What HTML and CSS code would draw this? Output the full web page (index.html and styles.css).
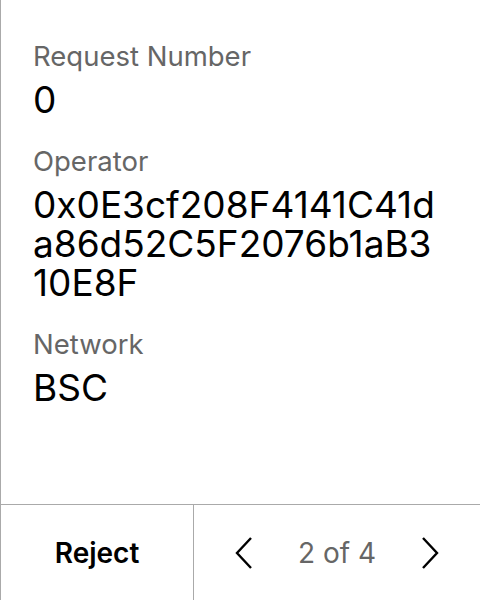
FILE: index.html
```html
<!DOCTYPE html>
<html>
<head>
<meta charset="utf-8">
<link rel="stylesheet" href="styles.css">
</head>
<body>
<div class="panel">
  <div class="content">
    <div class="field">
      <div class="label">Request Number</div>
      <div class="value">0</div>
    </div>
    <div class="field">
      <div class="label">Operator</div>
      <div class="value">0x0E3cf208F4141C41da86d52C5F2076b1aB310E8F</div>
    </div>
    <div class="field">
      <div class="label">Network</div>
      <div class="value">BSC</div>
    </div>
  </div>
  <div class="footer">
    <div class="reject">Reject</div>
    <div class="pager">
      <svg class="chev" width="18" height="32" viewBox="0 0 18 32"><path d="M16 1 L2 16 L16 31" fill="none" stroke="#000" stroke-width="2.4"/></svg>
      <span class="count">2 of 4</span>
      <svg class="chev" width="18" height="32" viewBox="0 0 18 32"><path d="M2 1 L16 16 L2 31" fill="none" stroke="#000" stroke-width="2.4"/></svg>
    </div>
  </div>
</div>
</body>
</html>
```
FILE: styles.css
```css
html, body {
  margin: 0;
  padding: 0;
  background: #fff;
}
.panel {
  width: 480px;
  height: 600px;
  box-sizing: border-box;
  border-left: 1px solid #aaa;
  display: flex;
  flex-direction: column;
  font-family: Inter, "Noto Sans", sans-serif;
}
.content {
  flex: 1;
  padding: 40px 38px 0 32px;
  display: flex;
  flex-direction: column;
  gap: 26px;
}
.label {
  font-size: 27.5px;
  line-height: 33px;
  color: #666;
}
.value {
  font-size: 37px;
  line-height: 39px;
  color: #000;
  word-break: break-all;
  padding-top: 7px;
}
.footer {
  height: 96px;
  border-top: 1px solid #aaa;
  display: flex;
  box-sizing: border-box;
}
.reject {
  width: 192px;
  border-right: 1px solid #aaa;
  display: flex;
  align-items: center;
  justify-content: center;
  font-size: 28px;
  font-weight: 600;
  color: #000;
}
.pager {
  flex: 1;
  display: flex;
  align-items: center;
  justify-content: space-between;
  padding: 0 41px 0 41px;
}
.count {
  font-size: 28px;
  color: #666;
}
.chev {
  display: block;
}
```
